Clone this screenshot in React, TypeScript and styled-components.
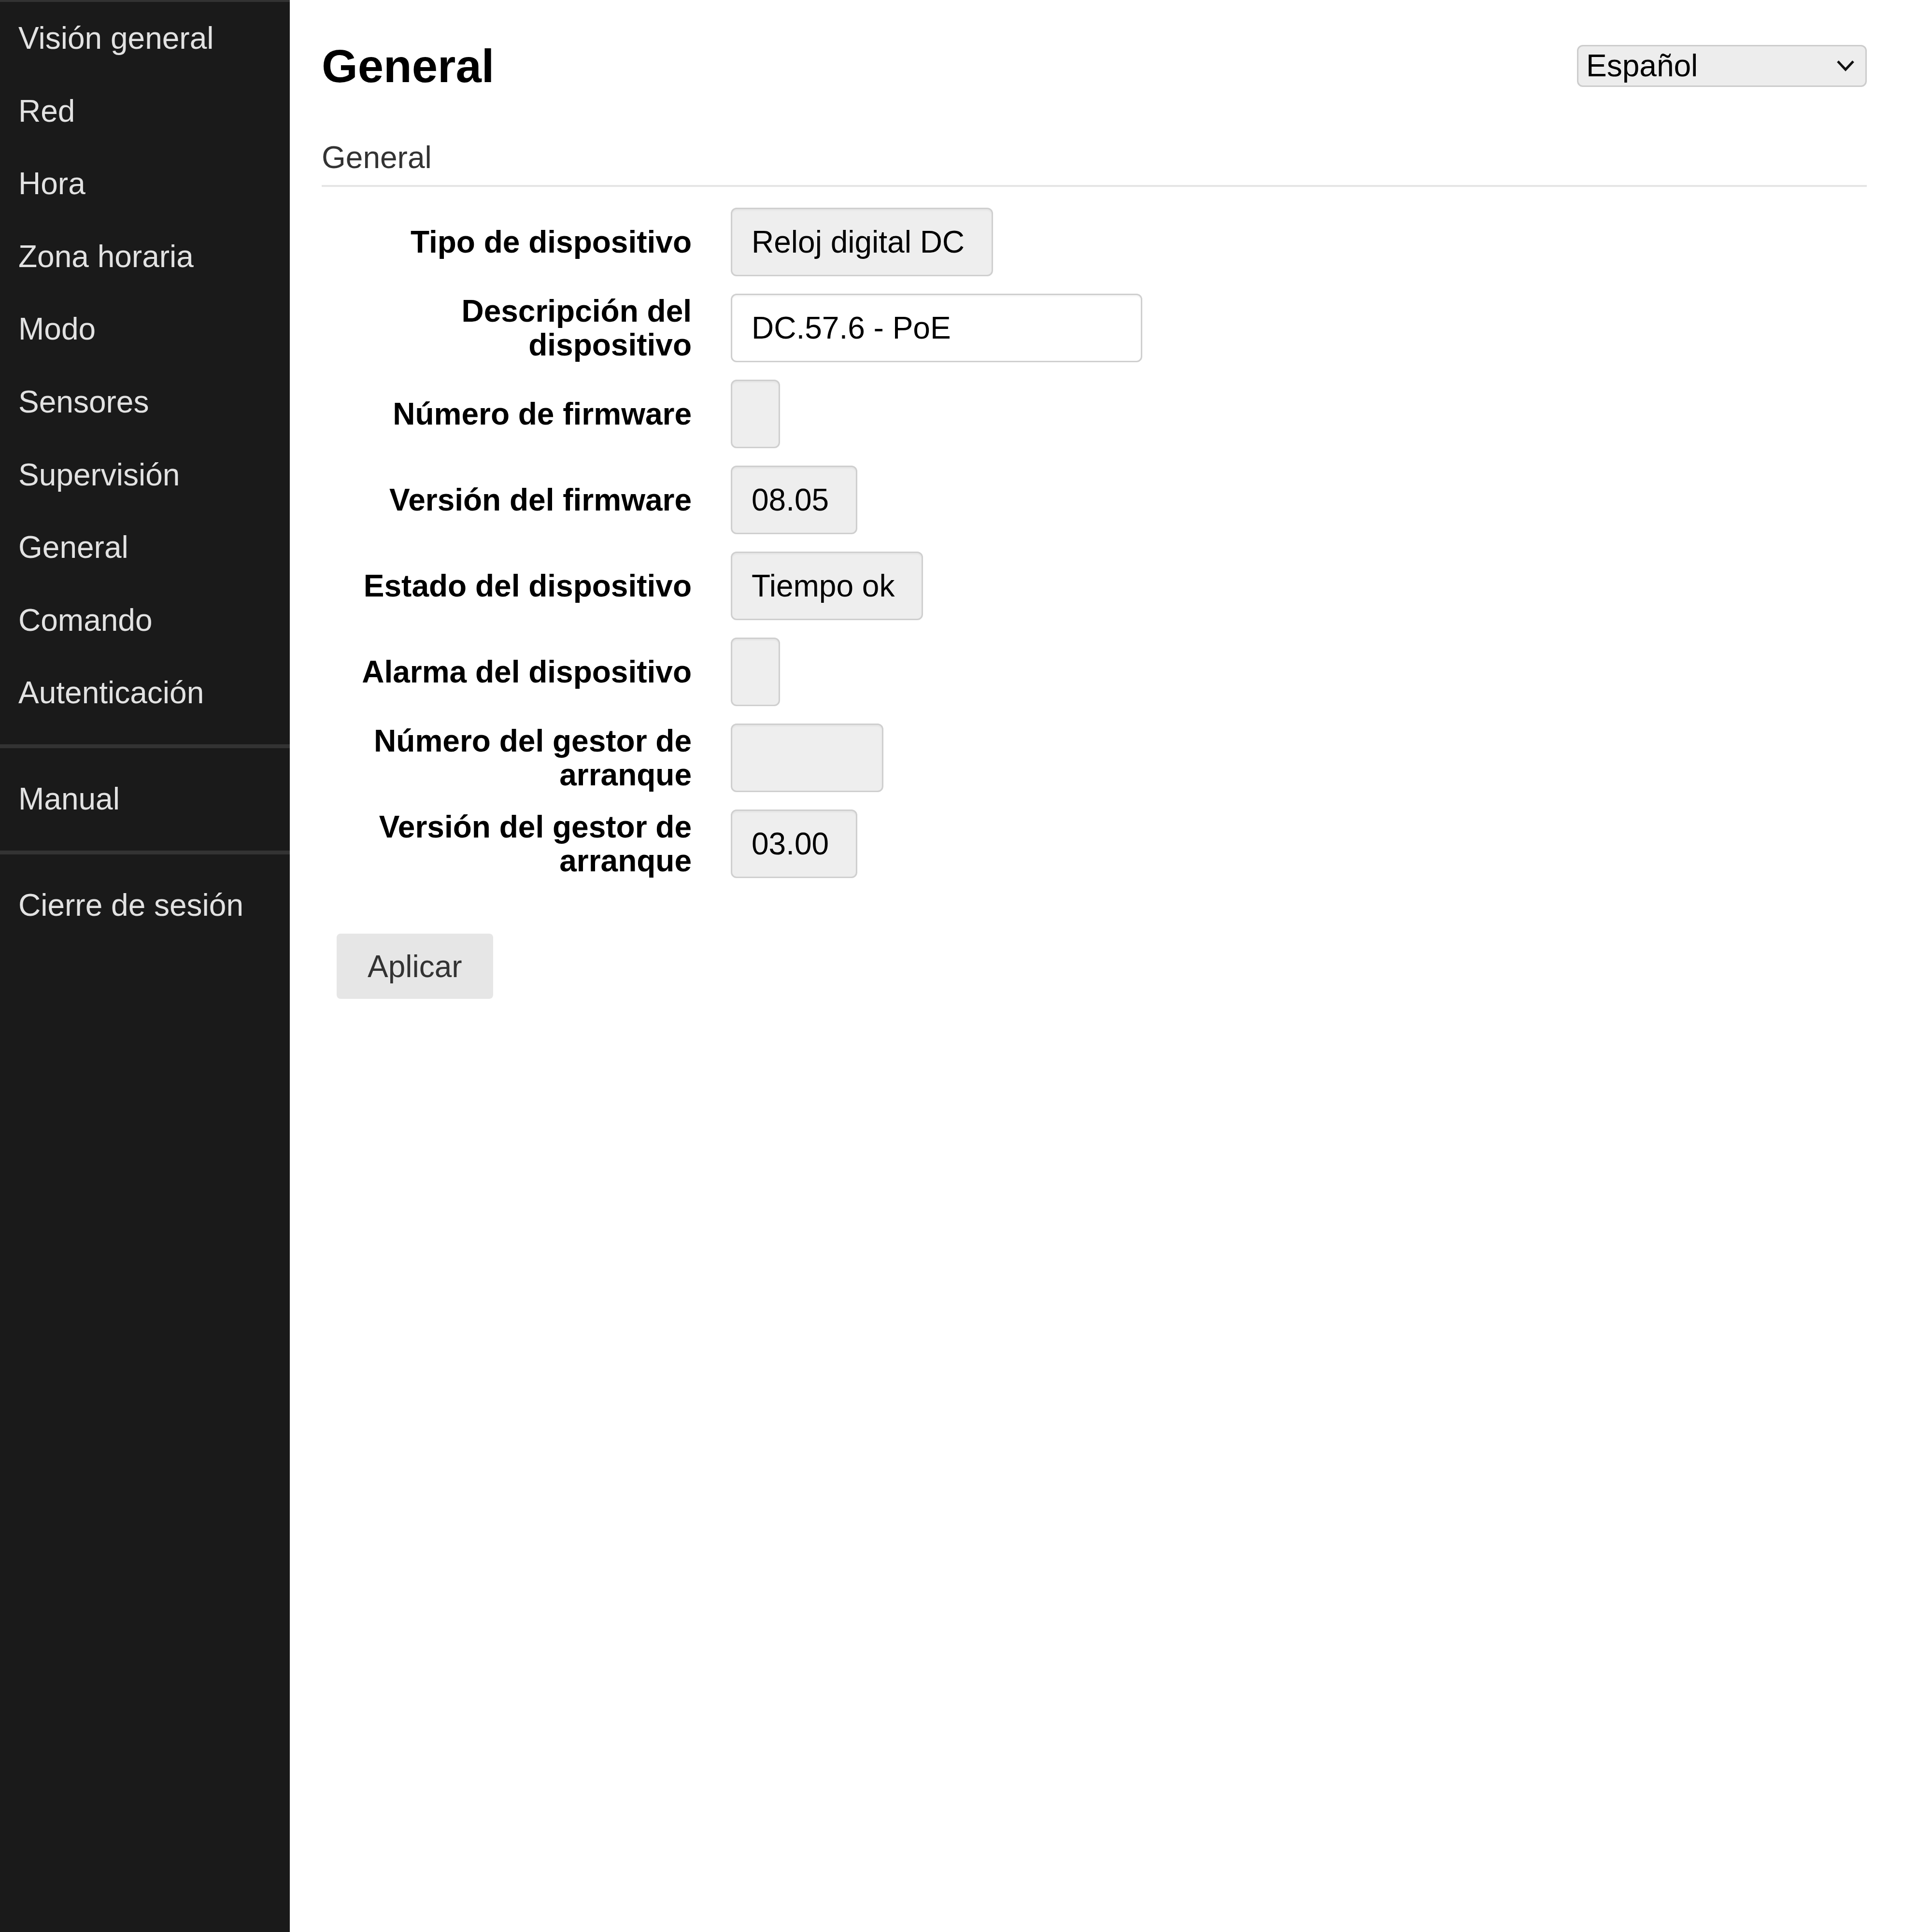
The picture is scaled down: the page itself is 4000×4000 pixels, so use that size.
import React from 'react';
import styled, { createGlobalStyle } from 'styled-components';

const GlobalStyle = createGlobalStyle`
  body {
    margin: 0;
    font-family: "Liberation Sans", Arial, sans-serif;
    background: #ffffff;
  }
`;

const Page = styled.div`
  display: flex;
  min-height: 100vh;
`;

const Sidebar = styled.nav`
  width: 600px;
  flex-shrink: 0;
  background: #1a1a1a;
  border-top: 4px solid #333333;
`;

const NavItem = styled.div`
  padding: 38px 38px;
  font-size: 64px;
  line-height: 74.6px;
  color: #e2e2e2;
`;

const NavDivider = styled.hr`
  height: 8px;
  margin: 31px 0 30px;
  border: none;
  background: #333333;
`;

const Main = styled.main`
  flex: 1;
  padding: 0 135px 0 66px;
`;

const Header = styled.header`
  display: flex;
  justify-content: space-between;
  align-items: center;
  padding-top: 82px;
`;

const Title = styled.h1`
  margin: 0;
  font-size: 96px;
  line-height: 110px;
  font-weight: bold;
  color: #000000;
`;

const LangSelect = styled.div`
  box-sizing: border-box;
  width: 600px;
  height: 87px;
  margin-top: -2px;
  display: flex;
  align-items: center;
  justify-content: space-between;
  padding: 0 22px 0 16px;
  background: #ededed;
  border: 3px solid #cccccc;
  border-radius: 12px;
  font-size: 64px;
  color: #000000;
`;

const SectionHeading = styled.h2`
  margin: 97px 0 0;
  padding-bottom: 20px;
  font-size: 64px;
  line-height: 74px;
  font-weight: normal;
  color: #333333;
  border-bottom: 4px solid #e5e5e5;
`;

const Form = styled.div`
  display: grid;
  grid-template-columns: 766px auto;
  column-gap: 81px;
  row-gap: 36px;
  align-items: center;
  justify-items: start;
  margin-top: 43px;
`;

const Label = styled.div`
  justify-self: stretch;
  text-align: right;
  font-size: 64px;
  line-height: 70px;
  font-weight: bold;
  color: #000000;
`;

const ValueBox = styled.div<{ $editable?: boolean; $width?: number }>`
  box-sizing: border-box;
  height: 142px;
  display: flex;
  align-items: center;
  padding: 0 56px 0 40px;
  ${(p) => (p.$width ? `width: ${p.$width}px;` : 'min-width: 102px;')}
  background: ${(p) => (p.$editable ? '#ffffff' : '#eeeeee')};
  border: 3px solid #cfcfcf;
  border-radius: 12px;
  box-shadow: inset 0 3px 3px rgba(0, 0, 0, 0.04);
  font-size: 64px;
  line-height: 74px;
  color: #000000;
  white-space: nowrap;
`;

const ApplyButton = styled.button`
  display: block;
  height: 135px;
  margin: 115px 0 0 31px;
  padding: 0 64px;
  border: none;
  border-radius: 8px;
  background: #e6e6e6;
  font-family: inherit;
  font-size: 64px;
  color: #333333;
`;

const navTop = [
  'Visión general',
  'Red',
  'Hora',
  'Zona horaria',
  'Modo',
  'Sensores',
  'Supervisión',
  'General',
  'Comando',
  'Autenticación',
];

type Field = { label: string; value: string; editable?: boolean; width?: number };

const fields: Field[] = [
  { label: 'Tipo de dispositivo', value: 'Reloj digital DC' },
  { label: 'Descripción del dispositivo', value: 'DC.57.6 - PoE', editable: true, width: 852 },
  { label: 'Número de firmware', value: '' },
  { label: 'Versión del firmware', value: '08.05' },
  { label: 'Estado del dispositivo', value: 'Tiempo ok' },
  { label: 'Alarma del dispositivo', value: '' },
  { label: 'Número del gestor de arranque', value: '', width: 316 },
  { label: 'Versión del gestor de arranque', value: '03.00' },
];

const Chevron = () => (
  <svg width="38" height="24" viewBox="0 0 38 24" fill="none">
    <path d="M3 3 L19 20 L35 3" stroke="#111" strokeWidth="5" />
  </svg>
);

export default function App() {
  return (
    <>
      <GlobalStyle />
      <Page>
        <Sidebar>
          {navTop.map((item) => (
            <NavItem key={item}>{item}</NavItem>
          ))}
          <NavDivider />
          <NavItem>Manual</NavItem>
          <NavDivider />
          <NavItem>Cierre de sesión</NavItem>
        </Sidebar>
        <Main>
          <Header>
            <Title>General</Title>
            <LangSelect>
              <span>Español</span>
              <Chevron />
            </LangSelect>
          </Header>
          <SectionHeading>General</SectionHeading>
          <Form>
            {fields.map((f) => (
              <React.Fragment key={f.label}>
                <Label>{f.label}</Label>
                <ValueBox $editable={f.editable} $width={f.width}>
                  {f.value}
                </ValueBox>
              </React.Fragment>
            ))}
          </Form>
          <ApplyButton>Aplicar</ApplyButton>
        </Main>
      </Page>
    </>
  );
}
